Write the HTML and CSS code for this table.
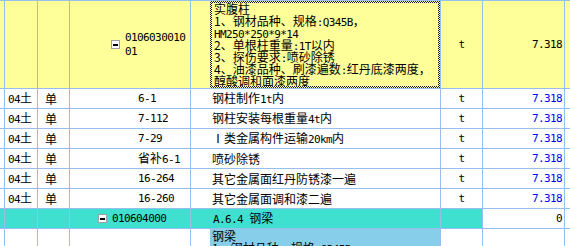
FILE: index.html
```html
<!DOCTYPE html>
<html lang="zh-CN">
<head>
<meta charset="utf-8">
<link rel="stylesheet" href="styles.css">
</head>
<body>
<div class="sheet">
  <!-- row 1: selected item -->
  <div class="c y"></div>
  <div class="c y"></div>
  <div class="c y"></div>
  <div class="c y code lv2"><span class="tog"></span><span class="m codetxt">0106030010<br>01</span></div>
  <div class="c y desc-top">
    <div class="sel">
      <div class="ln">实腹柱</div>
      <div class="ln">1、钢材品种、规格<span class="m">:Q345B</span>，</div>
      <div class="ln"><span class="m">HM250*250*9*14</span></div>
      <div class="ln">2、单根柱重量<span class="m">:1T</span>以内</div>
      <div class="ln">3、探伤要求<span class="m">:</span>喷砂除锈</div>
      <div class="ln">4、油漆品种、刷漆遍数<span class="m">:</span>红丹底漆两度，</div>
      <div class="ln">醇酸调和面漆两度</div>
    </div>
  </div>
  <div class="c y unit"><span class="m">t</span></div>
  <div class="c y num"><span class="m">7.318</span></div>
  <div class="c y"></div>

  <!-- row 2 -->
  <div class="c"></div>
  <div class="c spec"><span><span class="m">04</span>土</span></div>
  <div class="c kind">单</div>
  <div class="c qd"><span class="m">6-1</span></div>
  <div class="c desc"><span>钢柱制作<span class="m">1t</span>内</span></div>
  <div class="c unit"><span class="m">t</span></div>
  <div class="c num blue"><span class="m">7.318</span></div>
  <div class="c"></div>

  <!-- row 3 -->
  <div class="c"></div>
  <div class="c spec"><span><span class="m">04</span>土</span></div>
  <div class="c kind">单</div>
  <div class="c qd"><span class="m">7-112</span></div>
  <div class="c desc"><span>钢柱安装每根重量<span class="m">4t</span>内</span></div>
  <div class="c unit"><span class="m">t</span></div>
  <div class="c num blue"><span class="m">7.318</span></div>
  <div class="c"></div>

  <!-- row 4 -->
  <div class="c"></div>
  <div class="c spec"><span><span class="m">04</span>土</span></div>
  <div class="c kind">单</div>
  <div class="c qd"><span class="m">7-29</span></div>
  <div class="c desc"><span><span class="roman">Ⅰ</span>类金属构件运输<span class="m">20km</span>内</span></div>
  <div class="c unit"><span class="m">t</span></div>
  <div class="c num blue"><span class="m">7.318</span></div>
  <div class="c"></div>

  <!-- row 5 -->
  <div class="c"></div>
  <div class="c spec"><span><span class="m">04</span>土</span></div>
  <div class="c kind">单</div>
  <div class="c qd"><span>省补<span class="m">6-1</span></span></div>
  <div class="c desc"><span>喷砂除锈</span></div>
  <div class="c unit"><span class="m">t</span></div>
  <div class="c num blue"><span class="m">7.318</span></div>
  <div class="c"></div>

  <!-- row 6 -->
  <div class="c"></div>
  <div class="c spec"><span><span class="m">04</span>土</span></div>
  <div class="c kind">单</div>
  <div class="c qd"><span class="m">16-264</span></div>
  <div class="c desc"><span>其它金属面红丹防锈漆一遍</span></div>
  <div class="c unit"><span class="m">t</span></div>
  <div class="c num blue"><span class="m">7.318</span></div>
  <div class="c"></div>

  <!-- row 7 -->
  <div class="c"></div>
  <div class="c spec"><span><span class="m">04</span>土</span></div>
  <div class="c kind">单</div>
  <div class="c qd"><span class="m">16-260</span></div>
  <div class="c desc"><span>其它金属面调和漆二遍</span></div>
  <div class="c unit"><span class="m">t</span></div>
  <div class="c num blue"><span class="m">7.318</span></div>
  <div class="c"></div>

  <!-- row 8: chapter -->
  <div class="c t"></div>
  <div class="c t"></div>
  <div class="c t"></div>
  <div class="c t code lv1"><span class="tog"></span><span class="m">010604000</span></div>
  <div class="c t desc chap"><span><span class="m">A.6.4&nbsp;</span>钢梁</span></div>
  <div class="c t"></div>
  <div class="c num"><span class="m">0</span></div>
  <div class="c"></div>

  <!-- row 9: next item (cut off) -->
  <div class="c"></div>
  <div class="c"></div>
  <div class="c"></div>
  <div class="c"></div>
  <div class="c desc-top">
    <div class="edit">
      <div class="ln">钢梁</div>
      <div class="ln">1、钢材品种、规格<span class="m">:Q345B</span></div>
    </div>
  </div>
  <div class="c"></div>
  <div class="c"></div>
  <div class="c"></div>
</div>
</body>
</html>
```

FILE: styles.css
```css
html, body {
  margin: 0;
  padding: 0;
  width: 570px;
  height: 246px;
  overflow: hidden;
  background: #ffffff;
}

body {
  font-family: "Noto Sans CJK SC", "Noto Sans", sans-serif;
  font-size: 12px;
  line-height: 12px;
  color: #000000;
}

.sheet {
  display: grid;
  grid-template-columns: 4px 32px 31px 120px 249px 41px 81px 5px;
  grid-template-rows: 87px repeat(7, 19px) 17px;
  gap: 1px;
  padding-top: 1px;
  background: #96bfed;
  width: 570px;
  height: 245px;
  overflow: hidden;
}

.c {
  background: #ffffff;
  display: flex;
  align-items: center;
  overflow: hidden;
  white-space: nowrap;
  min-width: 0;
}

.y { background: #ffff99; }
.t { background: #40e0d0; }

.m {
  font-family: "DejaVu Sans Mono", "Liberation Mono", monospace;
  font-size: 11px;
  letter-spacing: -0.6px;
}

.roman {
  display: inline-block;
  width: 12px;
  text-align: center;
}

.spec { padding-left: 3px; }
.kind { padding-left: 7px; }
.qd { padding-left: 68px; }
.desc { padding-left: 21px; }
.chap { padding-left: 22px; }
.unit { justify-content: center; }
.num { justify-content: flex-end; padding-right: 2px; }
.blue { color: #0000ff; }

.lv2 { padding-left: 41px; }
.lv1 { padding-left: 28px; }

.tog {
  flex: none;
  width: 7px;
  height: 7px;
  border: 1px solid #a0a0a0;
  background: #ffffff;
  margin-right: 5px;
  display: flex;
  align-items: center;
  justify-content: center;
}
.tog::before {
  content: "";
  width: 5px;
  height: 2px;
  background: #000000;
}

.codetxt {
  line-height: 14px;
  padding-top: 1px;
}

.desc-top {
  align-items: stretch;
  padding-left: 19px;
}

.sel {
  flex: 1;
  border: 2px solid transparent;
  background:
    linear-gradient(#ffff99, #ffff99) padding-box,
    repeating-conic-gradient(#1b1b3a 0 25%, #ffff99 0 50%) 0 0 / 2px 2px border-box;
  padding-left: 2px;
  overflow: hidden;
}

.edit {
  flex: 1;
  background: #87ceeb;
  padding-left: 2px;
  padding-top: 1px;
  overflow: hidden;
}

.ln {
  height: 12px;
  line-height: 12px;
  white-space: nowrap;
}
```
